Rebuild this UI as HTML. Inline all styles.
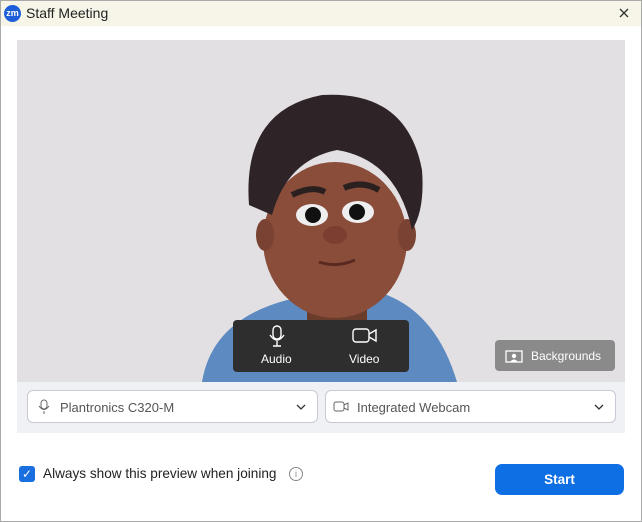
<!DOCTYPE html><html><head><style>
body{margin:0;width:642px;height:522px;background:#fff;font-family:"Liberation Sans",sans-serif;position:relative;overflow:hidden}
.a{position:absolute}
</style></head><body>
<div class="a" style="left:0;top:0;width:640px;height:520px;border:1px solid #aaa;"></div>
<div class="a" style="left:1px;top:1px;width:640px;height:25px;background:#f6f5e8"></div>
<div class="a" style="left:4px;top:5px;width:17px;height:17px;border-radius:50%;background:#1d5fd8;color:#fff;font-size:9px;font-weight:bold;text-align:center;line-height:16px">zm</div>
<div class="a" style="left:26px;top:5px;font-size:14px;color:#222">Staff Meeting</div>
<svg class="a" style="left:619px;top:8px" width="10" height="10"><path d="M1 1 L9 9 M9 1 L1 9" stroke="#333" stroke-width="1.3"/></svg>
<div class="a" style="left:17px;top:40px;width:608px;height:342px;background:#e2e0e3;overflow:hidden">
<svg width="608" height="342" style="position:absolute;left:0;top:0">
<path d="M185 342 Q195 280 270 260 L370 255 Q420 275 440 342Z" fill="#5d8ac0"/>
<path d="M290 240 L290 290 Q320 310 350 290 L350 240Z" fill="#6a3c2c"/>
<ellipse cx="318" cy="200" rx="72" ry="78" fill="#8a4d3a"/>
<ellipse cx="248" cy="195" rx="9" ry="16" fill="#7a4232"/>
<ellipse cx="390" cy="195" rx="9" ry="16" fill="#7a4232"/>
<path d="M232 165 Q225 70 305 55 Q390 50 405 130 Q408 170 395 190 Q380 120 320 110 Q270 120 255 175 Z" fill="#2e2428"/>
<ellipse cx="295" cy="175" rx="16" ry="11" fill="#eee"/><circle cx="296" cy="175" r="8" fill="#111"/>
<ellipse cx="341" cy="172" rx="16" ry="11" fill="#eee"/><circle cx="340" cy="172" r="8" fill="#111"/>
<path d="M275 155 Q295 145 308 152" stroke="#2a2020" stroke-width="6" fill="none"/>
<path d="M327 148 Q345 140 362 150" stroke="#2a2020" stroke-width="6" fill="none"/>
<ellipse cx="318" cy="195" rx="12" ry="9" fill="#7a3f30"/>
<path d="M302 222 Q320 228 338 220" stroke="#5a2a22" stroke-width="3" fill="none"/>
</svg>
<div class="a" style="left:216px;top:280px;width:176px;height:52px;background:#2e2e2e;border-radius:4px;color:#fff;font-size:12px">
<svg class="a" style="left:36px;top:5px" width="16" height="22"><rect x="4" y="1" width="8" height="13" rx="4" fill="none" stroke="#fff" stroke-width="1.4"/><path d="M1 10 Q8 20 15 10 M8 16 V21 M4 21 H12" fill="none" stroke="#fff" stroke-width="1.4"/></svg>
<div class="a" style="left:28px;top:32px">Audio</div>
<svg class="a" style="left:119px;top:8px" width="26" height="16"><rect x="1" y="1" width="16" height="13" rx="3" fill="none" stroke="#fff" stroke-width="1.4"/><path d="M17 6 L24 2 V13 L17 9" fill="none" stroke="#fff" stroke-width="1.4"/></svg>
<div class="a" style="left:116px;top:32px">Video</div>
</div>
<div class="a" style="left:478px;top:300px;width:120px;height:31px;background:#8a8a8a;border-radius:4px;color:#fff;font-size:12px">
<svg class="a" style="left:10px;top:10px" width="18" height="13"><rect x="1" y="1" width="16" height="11" fill="none" stroke="#fff" stroke-width="1.3"/><circle cx="9" cy="6" r="2.2" fill="#fff"/><path d="M5 12 Q9 7 13 12" fill="#fff"/></svg>
<div class="a" style="left:36px;top:9px">Backgrounds</div>
</div>
</div>
<div class="a" style="left:17px;top:382px;width:608px;height:51px;background:#eff1f5"></div>
<div class="a" style="left:27px;top:390px;width:289px;height:31px;background:#fff;border:1px solid #c9c9d4;border-radius:6px;font-size:13px;color:#555">
<svg class="a" style="left:10px;top:8px" width="12" height="16"><rect x="3" y="1" width="6" height="9" rx="3" fill="none" stroke="#666"/><path d="M1 7 Q6 14 11 7 M6 12 V15" fill="none" stroke="#666"/></svg>
<div class="a" style="left:32px;top:9px">Plantronics C320-M</div>
<svg class="a" style="left:268px;top:13px" width="10" height="6"><path d="M1 1 L5 5 L9 1" fill="none" stroke="#333" stroke-width="1.3"/></svg></div>
<div class="a" style="left:325px;top:390px;width:289px;height:31px;background:#fff;border:1px solid #c9c9d4;border-radius:6px;font-size:13px;color:#555">
<svg class="a" style="left:7px;top:10px" width="18" height="12"><rect x="1" y="1" width="10" height="9" rx="2" fill="none" stroke="#666"/><path d="M11 4 L15 2 V9 L11 7" fill="none" stroke="#666"/></svg>
<div class="a" style="left:31px;top:9px">Integrated Webcam</div>
<svg class="a" style="left:268px;top:13px" width="10" height="6"><path d="M1 1 L5 5 L9 1" fill="none" stroke="#333" stroke-width="1.3"/></svg></div>
<div class="a" style="left:19px;top:466px;width:16px;height:16px;background:#1a6fe0;border-radius:3px;color:#fff;font-size:12px;text-align:center;line-height:16px">✓</div>
<div class="a" style="left:43px;top:466px;font-size:13.6px;color:#222">Always show this preview when joining</div>
<div class="a" style="left:289px;top:467px;width:12px;height:12px;border:1px solid #888;border-radius:50%;font-size:9px;color:#888;text-align:center;line-height:12px">i</div>
<div class="a" style="left:495px;top:464px;width:129px;height:31px;background:#0e6ee4;border-radius:7px;color:#fff;font-size:13.5px;font-weight:bold;text-align:center;line-height:31px">Start</div>
</body></html>
